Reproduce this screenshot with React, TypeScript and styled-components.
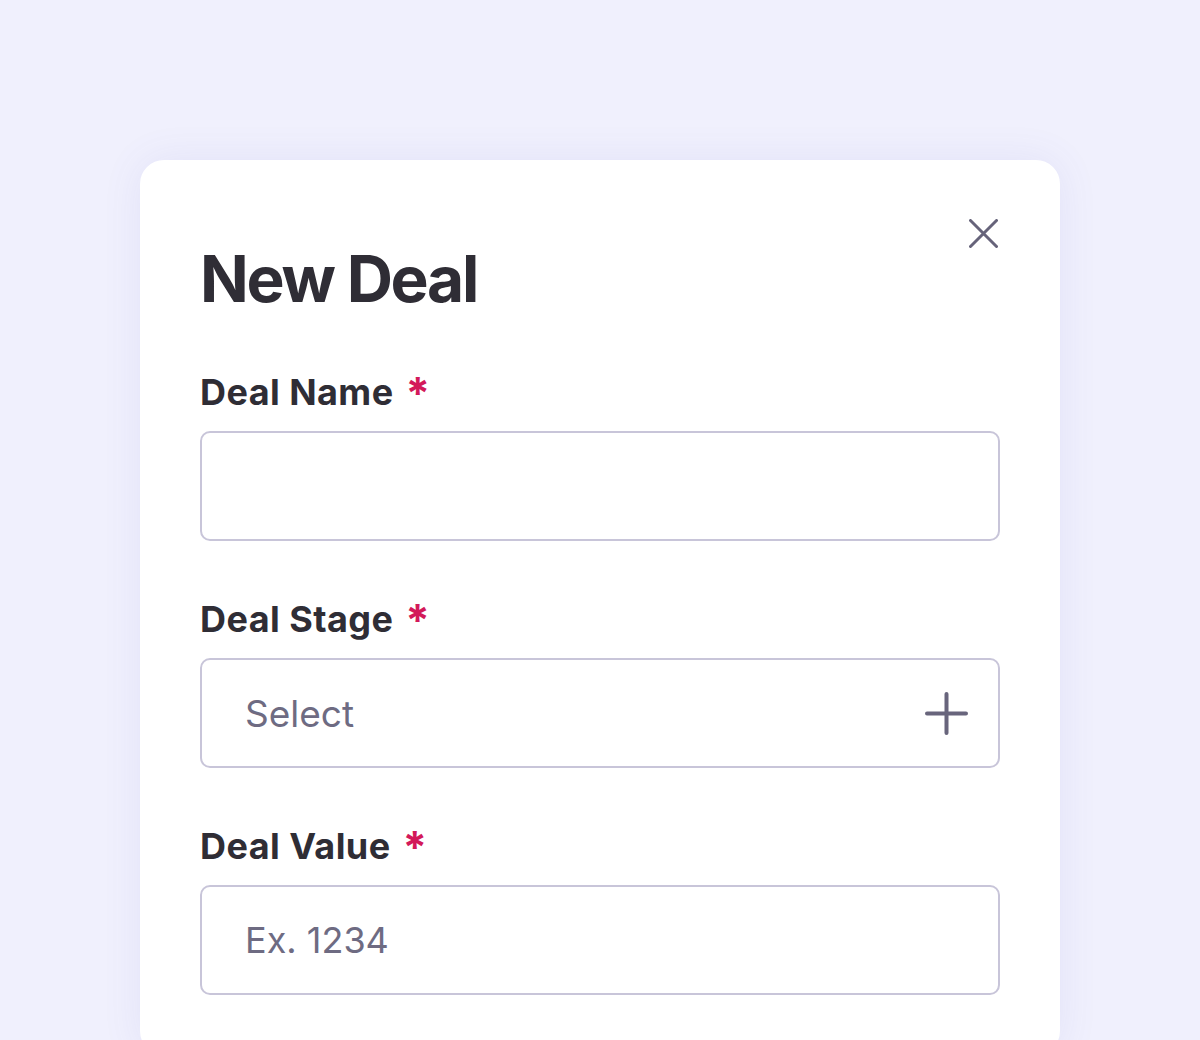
import React from "react";
import styled, { createGlobalStyle } from "styled-components";

const GlobalStyle = createGlobalStyle`
  html, body {
    margin: 0;
    padding: 0;
    background: #f0f0fd;
    height: 1040px;
    overflow: hidden;
  }
  * { box-sizing: border-box; }
  body {
    font-family: Inter, "Noto Sans", sans-serif;
  }
`;

const Page = styled.div`
  display: flex;
  justify-content: center;
  padding-top: 160px;
`;

const Card = styled.div`
  width: 920px;
  background: #ffffff;
  border-radius: 24px;
  padding: 59px 60px 60px;
  box-shadow: 0 0 40px rgba(90, 90, 190, 0.09);
`;

const Header = styled.div`
  display: flex;
  justify-content: space-between;
  align-items: flex-start;
`;

const Title = styled.h1`
  margin: 28px 0 0;
  font-size: 64px;
  line-height: 64px;
  font-weight: 700;
  letter-spacing: -0.035em;
  color: #2f2d35;
`;

const CloseButton = styled.button`
  width: 29px;
  height: 29px;
  margin-right: 2px;
  padding: 0;
  border: none;
  background: transparent;
  cursor: pointer;
  display: flex;
  color: #66637a;
`;

const Form = styled.div`
  margin-top: 59px;
  display: flex;
  flex-direction: column;
  gap: 56px;
`;

const Field = styled.div`
  display: flex;
  flex-direction: column;
  gap: 17px;
`;

const Label = styled.label`
  display: flex;
  align-items: flex-start;
  font-size: 36px;
  line-height: 44px;
  height: 44px;
  font-weight: 700;
  color: #2f2d35;
  letter-spacing: 0.012em;
`;

const Required = styled.span`
  color: #d3195a;
  margin-left: 12px;
  font-size: 44px;
  line-height: 44px;
  font-weight: 700;
  margin-top: 1px;
`;

const TextInput = styled.input`
  height: 110px;
  width: 100%;
  border: 2px solid #c8c5d9;
  border-radius: 10px;
  padding: 0 30px 0 43px;
  font-family: Inter, "Noto Sans", sans-serif;
  font-size: 36px;
  color: #2f2d35;
  outline: none;
  background: #fff;
  &::placeholder {
    color: #6e6b82;
  }
`;

const SelectBox = styled.div`
  height: 110px;
  border: 2px solid #c8c5d9;
  border-radius: 10px;
  padding: 0 30px 0 43px;
  display: flex;
  align-items: center;
  justify-content: space-between;
  cursor: pointer;
`;

const SelectText = styled.span`
  font-size: 37px;
  color: #6e6b82;
`;

const PlusIcon = () => (
  <svg width="43" height="43" viewBox="0 0 43 43" fill="none">
    <path d="M21.5 2v39M2 21.5h39" stroke="#68657c" strokeWidth="4" strokeLinecap="round" />
  </svg>
);

const XIcon = () => (
  <svg width="29" height="29" viewBox="0 0 29 29" fill="none">
    <path d="M1.5 1.5l26 26M27.5 1.5l-26 26" stroke="currentColor" strokeWidth="3" strokeLinecap="round" />
  </svg>
);

export default function App() {
  return (
    <>
      <GlobalStyle />
      <Page>
        <Card>
          <Header>
            <Title>New Deal</Title>
            <CloseButton aria-label="Close">
              <XIcon />
            </CloseButton>
          </Header>
          <Form>
            <Field>
              <Label>
                Deal Name<Required>*</Required>
              </Label>
              <TextInput type="text" />
            </Field>
            <Field>
              <Label>
                Deal Stage<Required>*</Required>
              </Label>
              <SelectBox>
                <SelectText>Select</SelectText>
                <PlusIcon />
              </SelectBox>
            </Field>
            <Field>
              <Label>
                Deal Value<Required>*</Required>
              </Label>
              <TextInput type="text" placeholder="Ex. 1234" />
            </Field>
          </Form>
        </Card>
      </Page>
    </>
  );
}
